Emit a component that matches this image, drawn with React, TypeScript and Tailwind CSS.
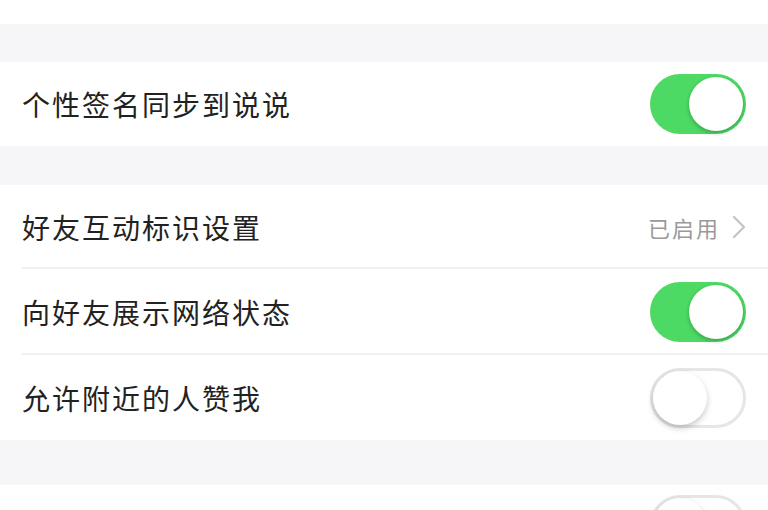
import React from "react";

function Toggle({ on }: { on: boolean }) {
  return on ? (
    <div className="w-[96px] h-[60px] rounded-full bg-[#4cd964] relative shrink-0">
      <div className="absolute right-[3px] top-[3px] w-[54px] h-[54px] rounded-full bg-white shadow-[0_2px_4px_rgba(0,0,0,0.25)]" />
    </div>
  ) : (
    <div className="w-[96px] h-[60px] rounded-full bg-white border-[3px] border-[#e6e6e6] relative shrink-0">
      <div className="absolute left-0 top-0 w-[54px] h-[54px] rounded-full bg-white shadow-[0_3px_6px_rgba(0,0,0,0.22)]" />
    </div>
  );
}

function Row({ label, right, divider, h }: { label: string; right: React.ReactNode; divider?: boolean; h: string }) {
  return (
    <div className={`bg-white relative flex items-center justify-between pl-[22px] pr-[22px] ${h}`}>
      <span className="text-[28px] text-[#222222] tracking-[2px]">{label}</span>
      {right}
      {divider && <div className="absolute left-[22px] right-0 bottom-0 h-[2px] bg-[#f0f0f2]" />}
    </div>
  );
}

export default function App() {
  return (
    <div
      className="w-[768px] h-[510px] overflow-hidden bg-[#f6f6f8] flex flex-col"
      style={{ fontFamily: '"Noto Sans CJK SC", "Noto Sans", sans-serif' }}
    >
      <div className="h-[24px] bg-white shrink-0" />
      <div className="h-[38px] shrink-0" />
      <Row label="个性签名同步到说说" right={<Toggle on />} h="h-[84px] shrink-0" />
      <div className="h-[39px] shrink-0" />
      <Row
        label="好友互动标识设置"
        h="h-[84px] shrink-0"
        divider
        right={
          <div className="flex items-center gap-[12px]">
            <span className="text-[22px] text-[#9a9a9a] tracking-[2px]">已启用</span>
            <svg width="14" height="24" viewBox="0 0 14 24" fill="none">
              <path d="M2 2l10 10-10 10" stroke="#c4c4c6" strokeWidth="2.2" strokeLinecap="round" strokeLinejoin="round" />
            </svg>
          </div>
        }
      />
      <Row label="向好友展示网络状态" right={<Toggle on />} divider h="h-[86px] shrink-0" />
      <Row label="允许附近的人赞我" right={<Toggle on={false} />} h="h-[85px] shrink-0" />
      <div className="h-[45px] shrink-0" />
      <div className="bg-white flex-1 flex items-start justify-end pr-[22px] pt-[10px]">
        <Toggle on={false} />
      </div>
    </div>
  );
}
